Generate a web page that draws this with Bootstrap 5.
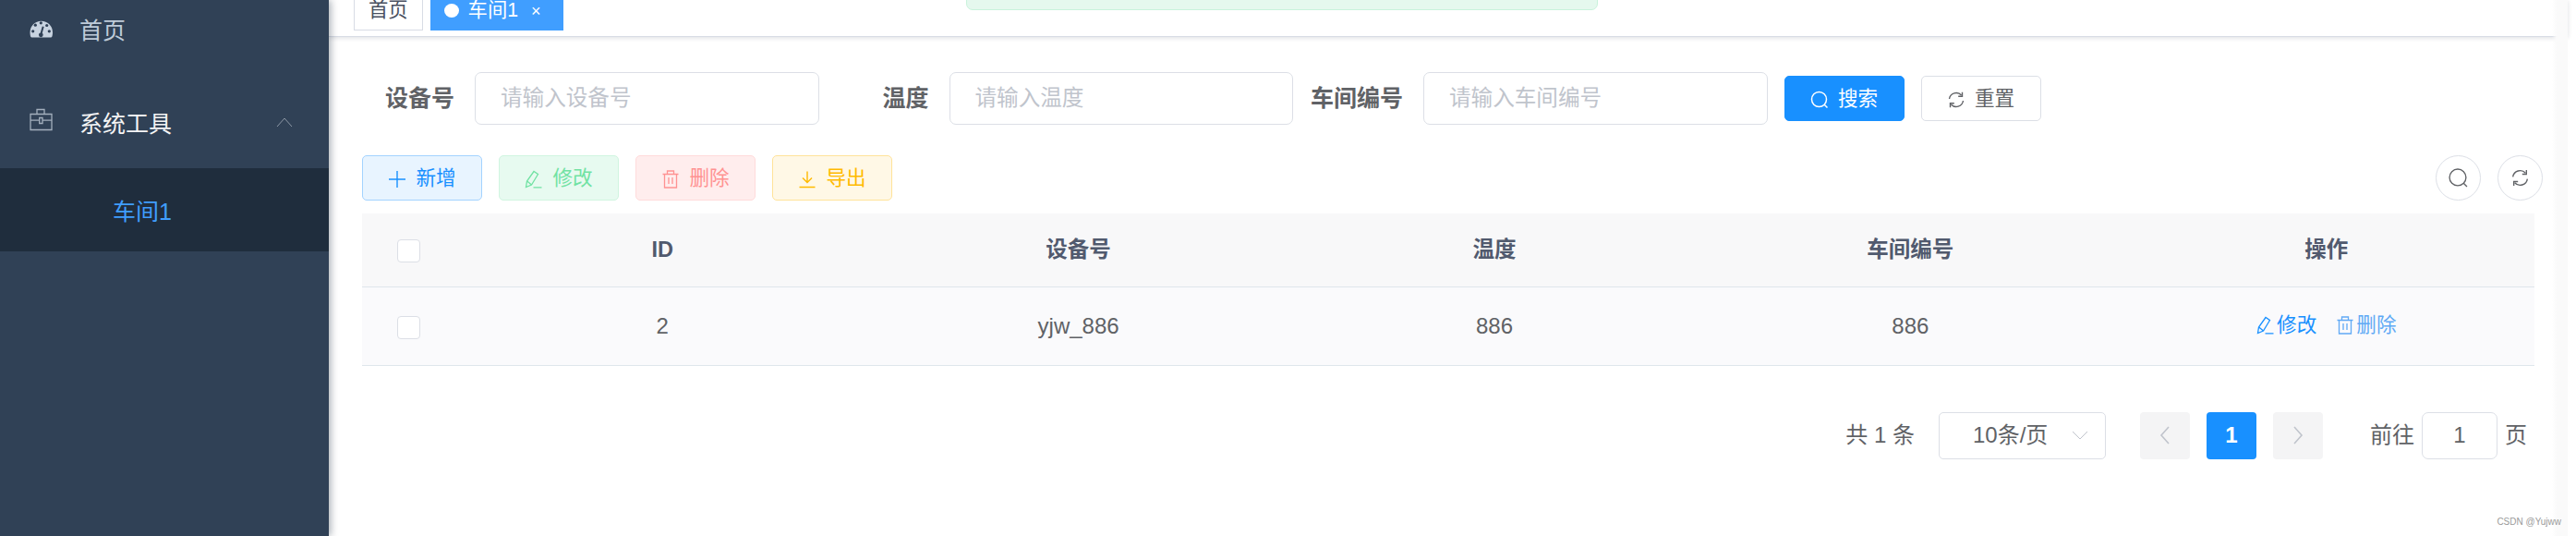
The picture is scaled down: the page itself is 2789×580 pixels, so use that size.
<!DOCTYPE html>
<html lang="zh-CN">
<head>
  <meta charset="UTF-8">
  <meta name="viewport" content="width=device-width, initial-scale=1.0">
  <title>车间1</title>
  <link href="https://cdn.jsdelivr.net/npm/bootstrap@5.3.2/dist/css/bootstrap.min.css" rel="stylesheet">
  <style>
    html, body { height: 100%; overflow: hidden; }
    body { font-family: "Liberation Sans", "Noto Sans CJK SC", sans-serif; color: #606266; background: #fff; }
    svg { fill: none; stroke: currentColor; stroke-width: 1; flex: none; }

    .app-shell { height: 580px; position: relative; overflow: hidden; }
    .side-bar { width: 356px; background: #304156; box-shadow: 2px 0 8px rgba(0,21,41,.35); z-index: 2; overflow: hidden; }
    .side-menu { margin-top: -18px; }
    .side-item { height: 100px; font-size: 25px; color: #bfcbd9; padding: 3px 0 0 32px; }
    .side-item svg { width: 26px; height: 26px; margin-right: 28px; overflow: visible; }
    .side-item.is-open { color: #f4f4f5; padding-top: 5px; }
    .side-item.is-open svg:first-child { position: relative; top: -1px; }
    .side-item .side-caret { width: 18px; height: 12px; margin: 0 0 0 auto; position: relative; left: -39px; top: -3px; color: #8c97a5; }
    .side-sub { height: 90px; background: #1f2d3d; color: #409eff; font-size: 25px; padding: 5px 0 0 122px; }

    .main-col { min-width: 0; margin-right: 9px; }
    .tab-bar { height: 40px; overflow: hidden; padding: 0 0 6px 27px; border-bottom: 1px solid #d8dce5; box-shadow: 0 1px 5px rgba(0,21,41,.14); gap: 8px; position: relative; }
    .tab-item { height: 46px; flex: none; font-size: 21.3px; line-height: 46px; border: 1px solid #d8dce5; color: #495060; padding: 0 15px; background: #fff; }
    .tab-item.is-on { background: #409eff; border-color: #409eff; color: #fff; padding: 0 23px 0 14px; }
    .tab-dot { display: inline-block; width: 16px; height: 15px; border-radius: 50%; background: #fff; margin-right: 10px; vertical-align: -1px; }
    .tab-x { font-size: 18px; margin-left: 14px; }

    .toast-box { position: absolute; left: 1046px; top: -40px; width: 684px; height: 51px; background: #e5f8ee; border: 1px solid #c9f3dc; border-radius: 7px; z-index: 3; }
    .edge-fade { position: absolute; top: 0; bottom: 0; right: 9px; width: 17px; background: linear-gradient(to right, rgba(250,250,250,0), #fafafa 30%); z-index: 1; pointer-events: none; }

    .page-body { padding: 38px 36px 0 36px; position: relative; }
    .query-row { height: 57px; gap: 18px; margin-left: -1px; }
    .query-item { flex: none; }
    .query-label { width: 123px; padding-right: 22px; text-align: right; font-size: 25px; font-weight: 700; color: #606266; white-space: nowrap; }
    .query-input { width: 372.5px; height: 57px; border: 1px solid #dcdfe6; border-radius: 7px; font-size: 23.6px; padding: 0 27px; color: #606266; background: #fff; outline: 0; }
    .query-input::placeholder { color: #c0c4cc; opacity: 1; }

    .act-btn { height: 49px; width: 130px; font-size: 21.6px; border-radius: 5px; padding: 2px 0 0; border: 1px solid #dcdfe6; gap: 10px; }
    .act-btn svg { width: 20px; height: 20px; }
    .act-search, .act-search:hover { background: #1890ff; border-color: #1890ff; color: #fff; }
    .act-reset, .act-reset:hover { background: #fff; color: #606266; }

    .tool-row { margin-top: 33px; height: 49px; gap: 18px; }
    .tool-btn { height: 49px; font-size: 21.6px; border-radius: 5px; padding: 2px 0 0; gap: 10px; width: 130px; border: 1px solid; }
    .tool-btn svg { width: 20px; height: 20px; }
    .tool-add, .tool-add:hover { background: #e8f4ff; border-color: #a3d3ff; color: #1890ff; }
    .tool-edit, .tool-edit:hover { background: #e7faf0; border-color: #d0f5e0; color: #71e2a3; }
    .tool-del, .tool-del:hover { background: #ffeded; border-color: #ffdbdb; color: #ff9292; }
    .tool-exp, .tool-exp:hover { background: #fff8e6; border-color: #ffe399; color: #ffba00; }
    .round-wrap { gap: 18px; margin-right: -9px; }
    .round-btn { width: 49px; height: 49px; border-radius: 50%; border: 1px solid #dcdfe6; background: #fff; color: #606266; padding: 0; }
    .round-btn svg { width: 21px; height: 21px; }

    .data-table { margin: 14px 0 0; table-layout: fixed; width: 100%; font-size: 24px; color: #606266; }
    .data-table > :not(caption) > * > * { padding: 0; text-align: center; vertical-align: middle; border-bottom: 1px solid #dfe6ec; box-shadow: none; color: #606266; background: transparent; }
    .data-table thead tr { height: 79px; background: #f8f8f9; }
    .data-table thead th { color: #515a6e; font-weight: 700; font-size: 23.5px; }
    .data-table tbody tr { height: 85px; background: #fafafc; }
    .data-table .col-check { width: 100px; }
    .check-box { display: inline-block; width: 25px; height: 25px; border: 1px solid #dcdfe6; border-radius: 4px; background: #fff; vertical-align: middle; }
    .row-link { color: #1890ff; font-size: 21.6px; gap: 2px; text-decoration: none; }
    .row-link svg { width: 20px; height: 20px; }
    .row-link.is-soft { color: #60a9f5; }
    .row-links { gap: 21px; }

    .pager-row { margin-top: 50px; height: 51px; font-size: 24px; color: #606266; padding-right: 8px; }
    .pager-total { margin-right: 26px; }
    .pager-select { width: 181px; height: 51px; border: 1px solid #dcdfe6; border-radius: 5px; padding: 0 18px 0 36px; margin-right: 37px; }
    .pager-select svg { width: 18px; height: 10px; color: #c0c4cc; margin-left: auto; }
    .pager-num { width: 54px; height: 51px; border-radius: 4px; background: #f4f4f5; color: #c0c4cc; margin-right: 18px; }
    .pager-num svg { width: 12px; height: 22px; stroke-width: 1.6; }
    .pager-num.is-on { background: #1890ff; color: #fff; font-weight: 700; }
    .pager-goto { margin-left: 51px; }
    .pager-input { width: 82px; height: 51px; border: 1px solid #dcdfe6; border-radius: 7px; margin: 0 8px; }

    .mark-text { position: absolute; right: 16px; bottom: 8px; font-size: 10px; color: #9a9a9a; z-index: 3; }
  </style>
</head>
<body>
  <div class="app-shell d-flex">
    <!-- 侧边栏 -->
    <aside class="side-bar flex-shrink-0">
      <div class="side-menu">
        <div class="side-item d-flex align-items-center">
          <svg viewBox="0 0 26 26"><path d="M2.5 19.5Q.5 19.5.5 14A12.2 12.2 0 0 1 25 14Q25 19.5 23 19.5Z" fill="#c8d3e0" stroke="none"/><path d="M12 17.2L14.7 7.8" stroke="#304156" stroke-width="2"/><circle cx="12.3" cy="16.8" r="2.4" fill="#304156" stroke="none"/><circle cx="3.7" cy="12.8" r="1.6" fill="#304156" stroke="none"/><circle cx="6.3" cy="6.2" r="1.6" fill="#304156" stroke="none"/><circle cx="12.3" cy="3.8" r="1.6" fill="#304156" stroke="none"/><circle cx="18.7" cy="6.5" r="1.6" fill="#304156" stroke="none"/><circle cx="21.3" cy="12.8" r="1.6" fill="#304156" stroke="none"/></svg>
          首页
        </div>
        <div class="side-item is-open d-flex align-items-center">
          <svg viewBox="0 0 26 26" style="color:#a3afbd"><path d="M1 2.5h23v17H1zM8 2.5V-2.5h8v5M1 9.2h9.7M14 9.2h10M10.7 6.5H14v6h-3.3z" stroke-width="1.3"/></svg>
          系统工具
          <svg class="side-caret" viewBox="0 0 18 12"><path d="M1 11 L9 2 L17 11"/></svg>
        </div>
        <div class="side-sub d-flex align-items-center">车间1</div>
      </div>
    </aside>

    <div class="main-col flex-grow-1">
      <!-- 标签栏 -->
      <div class="tab-bar d-flex align-items-end">
        <div class="tab-item">首页</div>
        <div class="tab-item is-on"><span class="tab-dot"></span>车间1<span class="tab-x">×</span></div>
      </div>

      <div class="page-body">
        <!-- 查询 -->
        <form class="query-row d-flex align-items-center">
          <div class="query-item d-flex align-items-center">
            <label class="query-label">设备号</label>
            <input class="query-input" type="text" placeholder="请输入设备号">
          </div>
          <div class="query-item d-flex align-items-center">
            <label class="query-label">温度</label>
            <input class="query-input" type="text" placeholder="请输入温度">
          </div>
          <div class="query-item d-flex align-items-center">
            <label class="query-label">车间编号</label>
            <input class="query-input" type="text" placeholder="请输入车间编号">
          </div>
          <button type="button" class="btn act-btn act-search d-flex align-items-center justify-content-center">
            <svg viewBox="0 0 20 20"><circle cx="9.5" cy="9.5" r="8" stroke-width="1.5"/><path d="M15.2 15.2l3.3 3.3" stroke-width="1.5"/></svg>搜索
          </button>
          <button type="button" class="btn act-btn act-reset d-flex align-items-center justify-content-center">
            <svg viewBox="0 0 20 20"><path d="M2.5 9A7.6 7.6 0 0 1 15.6 5M17.5 11A7.6 7.6 0 0 1 4.4 15" stroke-width="1.4"/><path d="M16.5 1.8V6.2H12.2M3.5 18.2V13.8H7.8" stroke-width="1.4"/></svg>重置
          </button>
        </form>

        <!-- 工具按钮 -->
        <div class="tool-row d-flex align-items-center">
          <button type="button" class="btn tool-btn tool-add d-flex align-items-center justify-content-center">
            <svg viewBox="0 0 20 20"><path d="M10 1v18M1 10h18" stroke-width="1.4"/></svg>新增
          </button>
          <button type="button" class="btn tool-btn tool-edit d-flex align-items-center justify-content-center">
            <svg viewBox="0 0 20 20"><path d="M1.5 18.5l1-6.5L10 1.5l4.5 3L7.5 16zM2.7 12l4.8 4M9.5 18.8h9" stroke-width="1.3"/></svg>修改
          </button>
          <button type="button" class="btn tool-btn tool-del d-flex align-items-center justify-content-center">
            <svg viewBox="0 0 20 20"><path d="M1.5 4.5h17M3.5 4.5V19h13V4.5M6.5 4.5V1h7v3.5M8 8v7M12 8v7" stroke-width="1.3"/></svg>删除
          </button>
          <button type="button" class="btn tool-btn tool-exp d-flex align-items-center justify-content-center">
            <svg viewBox="0 0 20 20"><path d="M10 1.5v12M5 8.5l5 5 5-5M1.5 18.5h17" stroke-width="1.4"/></svg>导出
          </button>
          <div class="round-wrap d-flex ms-auto">
            <button type="button" class="btn round-btn d-flex align-items-center justify-content-center">
              <svg viewBox="0 0 20 20"><circle cx="9.5" cy="9.5" r="8.5" stroke-width="1.3"/><path d="M15.5 15.5l3.5 3.5" stroke-width="1.3"/></svg>
            </button>
            <button type="button" class="btn round-btn d-flex align-items-center justify-content-center">
              <svg viewBox="0 0 20 20"><path d="M2.5 9A7.6 7.6 0 0 1 15.6 5M17.5 11A7.6 7.6 0 0 1 4.4 15" stroke-width="1.3"/><path d="M16.5 1.8V6.2H12.2M3.5 18.2V13.8H7.8" stroke-width="1.3"/></svg>
            </button>
          </div>
        </div>

        <!-- 表格 -->
        <table class="table data-table">
          <thead>
            <tr>
              <th class="col-check"><span class="check-box"></span></th>
              <th>ID</th>
              <th>设备号</th>
              <th>温度</th>
              <th>车间编号</th>
              <th>操作</th>
            </tr>
          </thead>
          <tbody>
            <tr>
              <td><span class="check-box"></span></td>
              <td>2</td>
              <td>yjw_886</td>
              <td>886</td>
              <td>886</td>
              <td>
                <div class="row-links d-flex justify-content-center">
                  <a class="row-link d-inline-flex align-items-center" href="#"><svg viewBox="0 0 20 20"><path d="M1.5 18.5l1-6.5L10 1.5l4.5 3L7.5 16zM2.7 12l4.8 4M9.5 18.8h9" stroke-width="1.3"/></svg>修改</a>
                  <a class="row-link is-soft d-inline-flex align-items-center" href="#"><svg viewBox="0 0 20 20"><path d="M1.5 4.5h17M3.5 4.5V19h13V4.5M6.5 4.5V1h7v3.5M8 8v7M12 8v7" stroke-width="1.3"/></svg>删除</a>
                </div>
              </td>
            </tr>
          </tbody>
        </table>

        <!-- 分页 -->
        <div class="pager-row d-flex align-items-center justify-content-end">
          <span class="pager-total">共 1 条</span>
          <div class="pager-select d-flex align-items-center">10条/页<svg viewBox="0 0 18 10"><path d="M1 1l8 8 8-8"/></svg></div>
          <div class="pager-num d-flex align-items-center justify-content-center"><svg viewBox="0 0 12 22"><path d="M10 2L2 11l8 9"/></svg></div>
          <div class="pager-num is-on d-flex align-items-center justify-content-center">1</div>
          <div class="pager-num d-flex align-items-center justify-content-center m-0"><svg viewBox="0 0 12 22"><path d="M2 2l8 9-8 9"/></svg></div>
          <span class="pager-goto text-nowrap">前往</span>
          <div class="pager-input d-flex align-items-center justify-content-center">1</div>
          <span>页</span>
        </div>
      </div>
    </div>

    <div class="edge-fade"></div>
    <div class="toast-box"></div>
    <div class="mark-text">CSDN @Yujww</div>
  </div>

  <script src="https://cdn.jsdelivr.net/npm/bootstrap@5.3.2/dist/js/bootstrap.bundle.min.js"></script>
</body>
</html>
